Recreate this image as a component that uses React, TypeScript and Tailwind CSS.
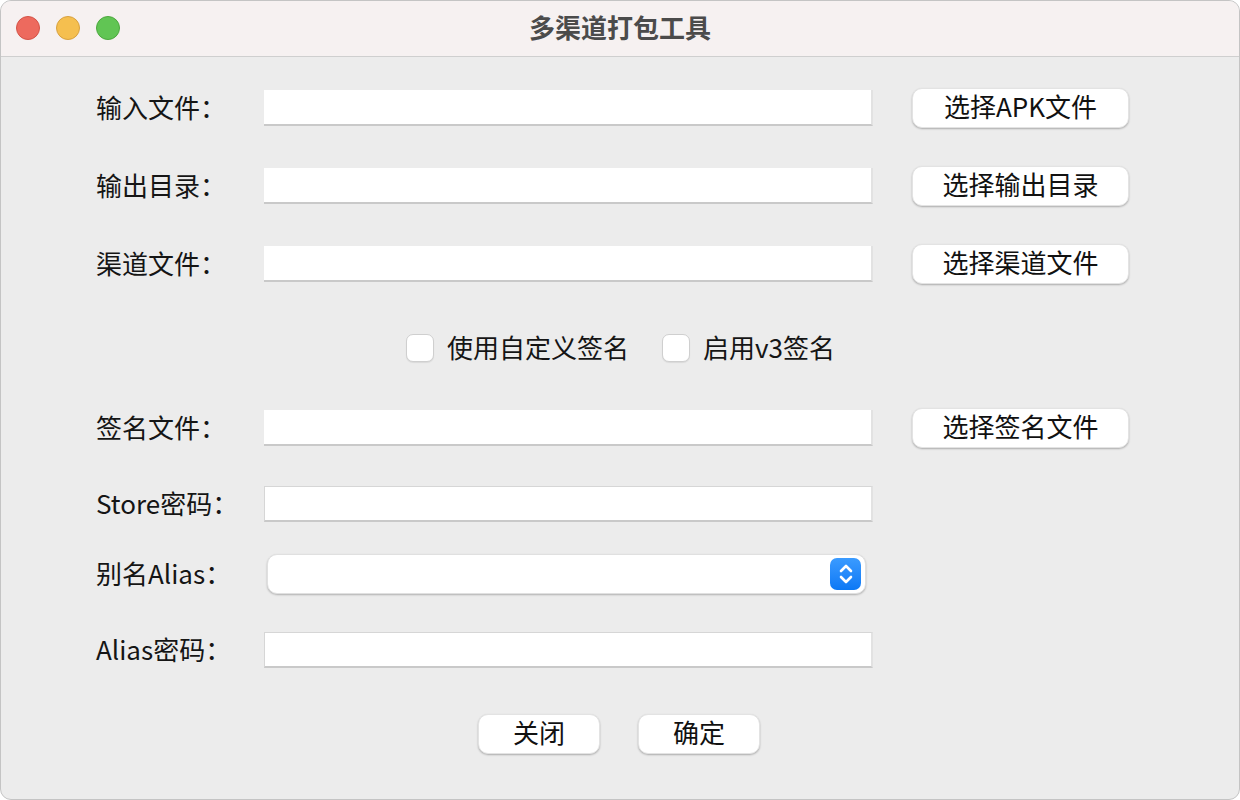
import React from "react";

const font = { fontFamily: '"Noto Sans CJK SC", "Noto Sans", sans-serif' };

function TextField({ boxed = false }: { boxed?: boolean }) {
  return (
    <div
      className={
        "h-[36px] w-[609px] bg-white border-b-2 border-b-[#c9c9c9] border-r-2 border-r-[#e2e2e2] " +
        (boxed ? "border-t border-t-[#d6d6d6] border-l border-l-[#d6d6d6]" : "")
      }
    />
  );
}

function Button({ label, width }: { label: string; width: string }) {
  return (
    <button
      className={
        "h-[40px] rounded-[10px] bg-white pb-[4px] text-[26px] leading-none text-[#111] shadow-[0_1px_2px_rgba(0,0,0,0.28)] border border-[#e3e3e3] flex items-center justify-center " +
        width
      }
    >
      {label}
    </button>
  );
}

function Row({
  label,
  action,
  boxed,
  className,
}: {
  label: string;
  action?: string;
  boxed?: boolean;
  className: string;
}) {
  return (
    <div className={"flex h-[40px] items-center " + className}>
      <div className="w-[168px] pb-[2px] text-[26px] leading-none text-[#151515]">{label}</div>
      <TextField boxed={boxed} />
      {action && (
        <div className="ml-[39px]">
          <Button label={action} width="w-[217px]" />
        </div>
      )}
    </div>
  );
}

function Check({ label }: { label: string }) {
  return (
    <div className="flex items-center">
      <div className="h-[28px] w-[28px] rounded-[7px] bg-white border border-[#cfcfcf] shadow-[0_1px_1px_rgba(0,0,0,0.08)]" />
      <span className="ml-[13px] pb-[3px] text-[26px] leading-none text-[#151515]">{label}</span>
    </div>
  );
}

export default function App() {
  return (
    <div className="h-[800px] w-[1240px] bg-white" style={font}>
      <div className="flex h-full w-full flex-col overflow-hidden rounded-[11px] border border-[#c4c4c4] bg-[#ececec]">
        <div className="relative flex h-[56px] shrink-0 items-center justify-center border-b border-[#cfcfcf] bg-[#f6f1f1]">
          <div className="absolute left-[15px] top-[15px] flex gap-[16px]">
            <div className="h-[24px] w-[24px] rounded-full bg-[#ed6a5e] border border-[#d45347]" />
            <div className="h-[24px] w-[24px] rounded-full bg-[#f5bf4f] border border-[#d8a13f]" />
            <div className="h-[24px] w-[24px] rounded-full bg-[#61c554] border border-[#4ca83e]" />
          </div>
          <span className="pb-[4px] text-[26px] font-bold leading-none text-[#4b4b4b]">多渠道打包工具</span>
        </div>

        <div className="flex flex-col pl-[95px]">
          <Row label="输入文件：" action="选择APK文件" className="mt-[31px]" />
          <Row label="输出目录：" action="选择输出目录" className="mt-[38px]" />
          <Row label="渠道文件：" action="选择渠道文件" className="mt-[38px]" />

          <div className="mt-[44px] flex h-[40px] items-center pl-[310px] gap-[33px]">
            <Check label="使用自定义签名" />
            <Check label="启用v3签名" />
          </div>

          <Row label="签名文件：" action="选择签名文件" className="mt-[40px]" />
          <Row label="Store密码：" boxed className="mt-[36px]" />

          <div className="mt-[30px] flex h-[40px] items-center">
            <div className="w-[171px] pb-[2px] text-[26px] leading-none text-[#151515]">别名Alias：</div>
            <div className="flex h-[40px] w-[599px] items-center justify-end rounded-[10px] border border-[#e0e0e0] bg-white pr-[4px] shadow-[0_1px_2px_rgba(0,0,0,0.25)]">
              <div className="flex h-[32px] w-[31px] items-center justify-center rounded-[7px] bg-gradient-to-b from-[#3a9bff] to-[#0a78f5]">
                <svg width="18" height="24" viewBox="0 0 18 24" fill="none">
                  <path d="M4 9 L9 4 L14 9" stroke="white" strokeWidth="2.6" strokeLinecap="round" strokeLinejoin="round" />
                  <path d="M4 15 L9 20 L14 15" stroke="white" strokeWidth="2.6" strokeLinecap="round" strokeLinejoin="round" />
                </svg>
              </div>
            </div>
          </div>

          <Row label="Alias密码：" boxed className="mt-[36px]" />

          <div className="mt-[44px] flex h-[40px] items-center pl-[382px] gap-[38px]">
            <Button label="关闭" width="w-[122px]" />
            <Button label="确定" width="w-[122px]" />
          </div>
        </div>
      </div>
    </div>
  );
}
